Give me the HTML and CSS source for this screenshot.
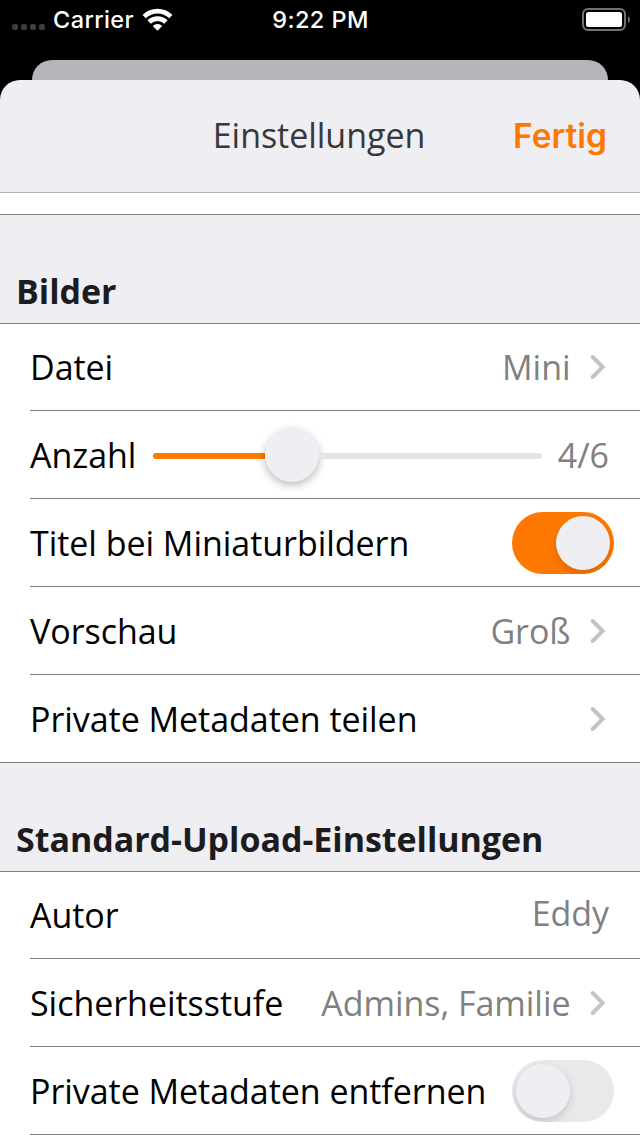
FILE: index.html
```html
<!DOCTYPE html>
<html lang="de">
<head>
<meta charset="utf-8">
<title>Einstellungen</title>
<link rel="stylesheet" href="styles.css">
</head>
<body>
<svg class="defs" width="0" height="0" aria-hidden="true">
  <symbol id="chevron" viewBox="0 0 16 26"><path d="M2.7 3 L12.6 13 L2.7 23" fill="none" stroke="#c4c4c6" stroke-width="4" stroke-linecap="round" stroke-linejoin="miter"/></symbol>
</svg>
<div class="screen">
  <header class="status">
    <div class="carrier">
      <span class="signal"><i></i><i></i><i></i><i></i></span>
      <span class="carrier-name">Carrier</span>
      <svg class="wifi" width="32" height="24" viewBox="0 0 32 24">
        <g fill="none" stroke="#fff" stroke-width="4.8">
          <path d="M2.2 8.6 A19 19 0 0 1 28.8 8.6"/>
          <path d="M7.1 14 A12 12 0 0 1 23.9 14"/>
        </g>
        <path d="M10.8 18 A6.8 6.8 0 0 1 20.2 18 L15.5 22.8 Z" fill="#fff"/>
      </svg>
    </div>
    <span class="time">9:22 PM</span>
    <svg class="battery" width="50" height="24" viewBox="0 0 50 24">
      <rect x="1" y="1" width="42" height="21" rx="5" fill="none" stroke="#727272" stroke-width="2"/>
      <rect x="4" y="4" width="36" height="15" rx="2.5" fill="#fff"/>
      <path d="M46 8 Q48 9 48 11.5 Q48 14 46 15 Z" fill="#727272"/>
    </svg>
  </header>
  <div class="back-card"></div>
  <main class="sheet">
    <nav class="navbar">
      <h1>Einstellungen</h1>
      <button class="done">Fertig</button>
    </nav>
    <div class="gap"></div>
    <h2>Bilder</h2>
    <section class="group closed">
      <div class="row"><span class="label">Datei</span><span class="value">Mini</span><svg class="chev"><use href="#chevron"/></svg></div>
      <div class="row"><span class="label anzahl">Anzahl</span><div class="slider"><div class="fill"></div><div class="thumb"></div><div class="rest"></div></div><span class="value end">4/6</span></div>
      <div class="row"><span class="label">Titel bei Miniaturbildern</span><div class="toggle on"><div class="knob"></div></div></div>
      <div class="row"><span class="label">Vorschau</span><span class="value">Groß</span><svg class="chev"><use href="#chevron"/></svg></div>
      <div class="row"><span class="label">Private Metadaten teilen</span><svg class="chev"><use href="#chevron"/></svg></div>
    </section>
    <h2>Standard-Upload-Einstellungen</h2>
    <section class="group open">
      <div class="row"><span class="label">Autor</span><span class="value end author">Eddy</span></div>
      <div class="row"><span class="label">Sicherheitsstufe</span><span class="value">Admins, Familie</span><svg class="chev"><use href="#chevron"/></svg></div>
      <div class="row"><span class="label">Private Metadaten entfernen</span><div class="toggle"><div class="knob"></div></div></div>
    </section>
  </main>
</div>
</body>
</html>
```
FILE: styles.css
```css
* { box-sizing: border-box; }
body { margin: 0; background: #000; }
.defs { display: block; height: 0; }
.screen {
  width: 640px;
  height: 1136px;
  overflow: hidden;
  display: flex;
  flex-direction: column;
  font-family: "Open Sans", sans-serif;
  font-size: 34px;
  line-height: 46px;
  letter-spacing: -0.04px;
}
.status {
  flex: none;
  height: 60px;
  padding: 0 8px 0 12px;
  display: grid;
  grid-template-columns: 1fr auto 1fr;
  align-items: start;
  color: #fff;
  font: 450 23.5px/40px Inter, sans-serif;
  letter-spacing: 0.4px;
}
.carrier { display: flex; height: 40px; }
.signal { display: flex; gap: 3px; padding-top: 24px; margin-right: 8px; }
.signal i { width: 6px; height: 6px; border-radius: 2px; background: #3d3d3d; }
.carrier-name { width: 81px; margin-right: 8px; }
.time { margin-right: 3px; }
.wifi { margin-top: 8px; }
.battery { justify-self: end; margin-top: 8px; }
.back-card {
  flex: none;
  height: 20px;
  margin: 0 32px;
  border-radius: 20px 20px 0 0;
  background: #b5b6bb;
}
.sheet {
  flex: none;
  height: 1056px;
  overflow: hidden;
  border-radius: 20px 20px 0 0;
  background: #efeef3;
}
.navbar {
  height: 113px;
  border-bottom: 1px solid #b2b2b4;
  display: grid;
  grid-template-columns: 1fr auto 1fr;
  align-items: center;
}
h1 {
  grid-column: 2;
  margin: 0;
  padding: 0 2px 2px 0;
  font-size: 34px;
  font-weight: 400;
  color: #38383a;
}
.done {
  grid-column: 3;
  justify-self: end;
  margin-right: 33px;
  padding: 0;
  border: 0;
  background: none;
  color: #ff7900;
  font: 600 33.5px/46px Inter, sans-serif;
}
.gap { height: 22px; background: #fff; border-bottom: 1px solid #808083; }
h2 {
  height: 109px;
  margin: 0;
  padding: 53px 16px 0;
  border-bottom: 1px solid #808083;
  font-size: 34px;
  line-height: 46px;
  font-weight: 700;
  color: #1c1c1e;
}
.group { background: #fff; }
.group.closed { border-bottom: 1px solid #808083; }
.group.open { padding-bottom: 1px; }
.row {
  height: 88px;
  margin-left: 30px;
  padding-top: 1px;
  border-bottom: 1px solid #808083;
  display: flex;
  align-items: center;
  color: #000;
  white-space: nowrap;
}
.row:first-child { height: 87px; padding-top: 0; }
.closed .row:last-child { height: 87px; border-bottom: 0; }
.label { flex: 1; }
.anzahl { flex: none; width: 123px; }
.value { color: #808080; margin-right: 19.5px; }
.value.end { margin-right: 31px; }
.value.author { padding-bottom: 4px; }
.chev { width: 16px; height: 26px; margin-right: 34px; }
.slider { flex: 1; display: flex; align-items: center; margin-right: 16px; padding-top: 1px; }
.fill { width: 112px; height: 6px; border-radius: 3px 0 0 3px; background: #ff7900; }
.rest { flex: 1; height: 6px; border-radius: 0 3px 3px 0; background: #e4e4e6; }
.thumb {
  width: 54px;
  height: 54px;
  margin-top: -2px;
  border-radius: 50%;
  background: #efeef3;
  box-shadow: 0 3px 8px rgba(0, 0, 0, 0.28);
}
.toggle {
  width: 102px;
  height: 62px;
  margin-right: 26px;
  padding: 4px;
  border-radius: 31px;
  background: #e9e9eb;
  display: flex;
  overflow: hidden;
}
.toggle.on { background: #ff7900; justify-content: flex-end; }
.knob {
  width: 54px;
  height: 54px;
  border-radius: 50%;
  background: #efeef3;
  box-shadow: 0 4px 8px rgba(0, 0, 0, 0.15);
}
```
